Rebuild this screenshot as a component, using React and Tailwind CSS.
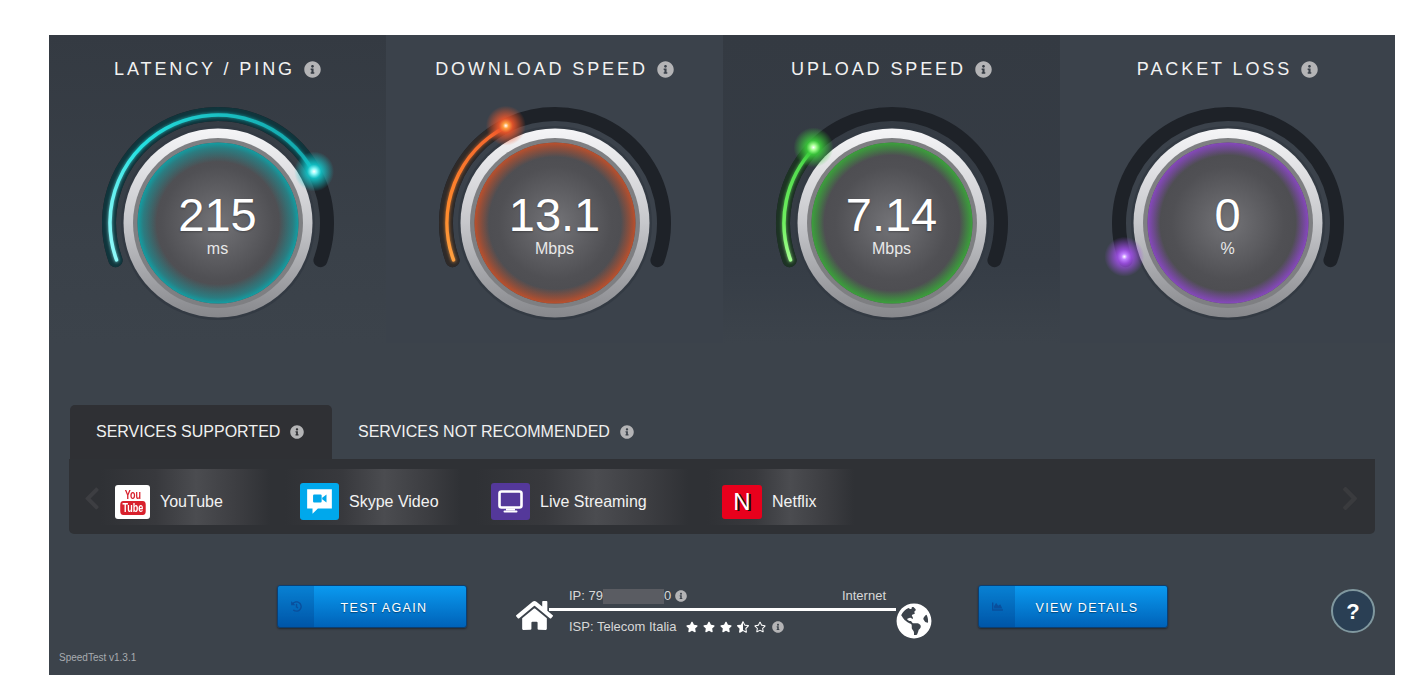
import React from "react";
import { FaInfoCircle, FaHome, FaGlobeAmericas, FaHistory, FaChartArea, FaStar, FaStarHalfAlt, FaRegStar, FaChevronLeft, FaChevronRight } from "react-icons/fa";

const gauges = [
  { id: "ping", title: "LATENCY / PING", value: "215", unit: "ms", end: 331.8, glow: "#0fa3a8", core: "#12c8cc", from: "#8ffafa", mid: "#25e2e2", to: "#12a8ad", tint: "#10353c", edge: 0.76, col: "bg-[linear-gradient(#343a42,#3a4149_70%,#3c434b)]" },
  { id: "down", title: "DOWNLOAD SPEED", value: "13.1", unit: "Mbps", end: 243.2, glow: "#c2502a", core: "#f0562a", from: "#ffa040", mid: "#ff8a2c", to: "#f4622c", tint: "#2e2a29", edge: 0.82, col: "bg-[#3b424b]" },
  { id: "up", title: "UPLOAD SPEED", value: "7.14", unit: "Mbps", end: 223.9, glow: "#3aa63a", core: "#3ccf3c", from: "#a4ff90", mid: "#70f060", to: "#48d648", tint: "#1d3324", edge: 0.84, col: "bg-[linear-gradient(#343a42,#363d46_75%,#3c434b)]" },
  { id: "loss", title: "PACKET LOSS", value: "0", unit: "%", end: 162, glow: "#8a48c4", core: "#a050e8", from: "#c080ff", mid: "#a050e8", to: "#a050e8", tint: "#1f2329", edge: 0.84, col: "bg-[#3b424b]" },
];

const services = [
  { name: "YouTube", icon: <YoutubeIcon />, cell: "w-[185px] pl-[15px]" },
  { name: "Skype Video", icon: <SkypeIcon />, cell: "w-[191px] pl-[15px]" },
  { name: "Live Streaming", icon: <LiveIcon />, cell: "w-[231px] pl-[15px]" },
  { name: "Netflix", icon: <NetflixIcon />, cell: "w-[160px] pl-[15px]" },
];

const point = (deg, r = 109) => {
  const a = (deg * Math.PI) / 180;
  return [120 + r * Math.cos(a), 120 + r * Math.sin(a)];
};

const arc = (from, to, r = 109) => {
  const [x1, y1] = point(from, r);
  const [x2, y2] = point(to, r);
  return `M ${x1} ${y1} A ${r} ${r} 0 ${to - from > 180 ? 1 : 0} 1 ${x2} ${y2}`;
};

function Info({ className }) {
  return <FaInfoCircle className={`text-[#b4b4b6] ${className}`} />;
}

function Gauge({ g }) {
  const [sx, sy] = point(160);
  const [ex, ey] = point(g.end);
  const hasValue = g.end > 165;
  return (
    <div className="relative w-[240px] h-[240px]">
      <svg width="240" height="240" viewBox="0 0 240 240" className="absolute inset-0 overflow-visible">
        <defs>
          <linearGradient id={`ring-${g.id}`} x1="0" y1="0" x2="0" y2="1">
            <stop offset="0" stopColor="#f5f5f7" />
            <stop offset="0.5" stopColor="#c6c7cb" />
            <stop offset="1" stopColor="#87888c" />
          </linearGradient>
          <radialGradient id={`disc-${g.id}`}>
            <stop offset="0" stopColor="#737377" />
            <stop offset="0.7" stopColor="#505054" />
            <stop offset="1" stopColor="#4c4c50" />
          </radialGradient>
          <radialGradient id={`edge-${g.id}`}>
            <stop offset={g.edge} stopColor={g.glow} stopOpacity="0" />
            <stop offset="0.93" stopColor={g.glow} stopOpacity="0.55" />
            <stop offset="1" stopColor={g.glow} stopOpacity="0.95" />
          </radialGradient>
          <radialGradient id={`dot-${g.id}`}>
            <stop offset="0" stopColor="#ffffff" />
            <stop offset="0.14" stopColor={g.from} />
            <stop offset="0.35" stopColor={g.core} stopOpacity="0.9" />
            <stop offset="1" stopColor={g.core} stopOpacity="0" />
          </radialGradient>
          <linearGradient id={`line-${g.id}`} gradientUnits="userSpaceOnUse" x1={sx} y1={sy} x2={ex} y2={ey}>
            <stop offset="0" stopColor={g.from} />
            <stop offset="0.3" stopColor={g.mid} />
            <stop offset="1" stopColor={g.to} />
          </linearGradient>
          <filter id={`soft-${g.id}`} x="-30%" y="-30%" width="160%" height="160%">
            <feGaussianBlur stdDeviation="1.6" />
          </filter>
        </defs>

        <path d={arc(160, 380)} fill="none" stroke="#1e2228" strokeWidth="14" strokeLinecap="round" />
        {hasValue && (
          <>
            <path d={arc(160, g.end)} fill="none" stroke={g.tint} strokeWidth="14" strokeLinecap="round" />
            <path d={arc(160, g.end, 108)} fill="none" stroke={`url(#line-${g.id})`} strokeOpacity="0.55" strokeWidth="5" strokeLinecap="round" filter={`url(#soft-${g.id})`} />
            <path d={arc(160, g.end, 108)} fill="none" stroke={`url(#line-${g.id})`} strokeWidth="3.5" strokeLinecap="round" />
          </>
        )}

        <circle cx="120" cy="120" r="97" fill="#333a43" />
        <circle cx="120" cy="120" r="94.5" fill={`url(#ring-${g.id})`} />
        <circle cx="120" cy="120" r="85" fill="#7e7f82" />
        <circle cx="120" cy="120" r="80.5" fill={`url(#disc-${g.id})`} />
        <circle cx="120" cy="120" r="80.5" fill={`url(#edge-${g.id})`} />
        <circle cx={ex} cy={ey} r="20" fill={`url(#dot-${g.id})`} />
      </svg>
      <div className="absolute inset-x-0 top-[93px] flex flex-col items-center text-white">
        <span className="text-[47px] leading-[38px] [text-shadow:0_1px_2px_rgba(0,0,0,0.3)]">{g.value}</span>
        <span className="text-[16px] leading-[18px] mt-[6px] text-[#e8e8e8]">{g.unit}</span>
      </div>
    </div>
  );
}

function YoutubeIcon() {
  return (
    <div className="w-[35px] h-[34px] rounded-[3px] bg-white flex flex-col items-center justify-center font-bold text-[#d8202c] leading-none">
      <span className="text-[12px] leading-[12px] scale-x-75">You</span>
      <span className="text-[12px] leading-[14px] px-[3px] rounded-[4px] bg-[#d8202c] text-white scale-x-75">Tube</span>
    </div>
  );
}

function SkypeIcon() {
  return (
    <div className="w-[39px] h-[37px] rounded-[3px] bg-[#00a8ec] flex items-center justify-center">
      <svg width="29" height="29" viewBox="0 0 27 27">
        <path d="M2 2 H25 V20 H12 L7 25 V20 H2 Z" fill="#fff" />
        <rect x="7.5" y="7" width="8" height="7.5" rx="1" fill="#00a8ec" />
        <path d="M16 10 L20 7 V14.5 L16 11.5 Z" fill="#00a8ec" />
      </svg>
    </div>
  );
}

function LiveIcon() {
  return (
    <div className="w-[39px] h-[37px] rounded-[3px] bg-[#54389a] flex items-center justify-center">
      <svg width="27" height="27" viewBox="0 0 27 27">
        <rect x="2.5" y="3.5" width="22" height="16" rx="2" fill="none" stroke="#fff" strokeWidth="2.6" />
        <rect x="9" y="20.5" width="9" height="2" fill="#fff" />
        <rect x="6.5" y="22.5" width="14" height="2" rx="1" fill="#fff" />
      </svg>
    </div>
  );
}

function NetflixIcon() {
  return (
    <div className="w-[40px] h-[34px] rounded-[3px] bg-[#e8001c] flex items-center justify-center text-[24px] text-white [text-shadow:2px_1px_0_#111]">
      N
    </div>
  );
}

function BlueButton({ icon, label, textClass }) {
  return (
    <button className="flex h-[43px] w-[190px] overflow-hidden rounded-[3px] border border-[#0b3f73] bg-[linear-gradient(#0a9af0,#0062b8)] shadow-[0_1px_2px_rgba(0,0,0,0.4)]">
      <span className="flex h-full w-[36px] items-center justify-center bg-[rgba(0,40,110,0.22)] text-[#0a4f9c] text-[11px]">{icon}</span>
      <span className={`flex-1 h-full flex items-center justify-center pt-[3px] text-[12.5px] tracking-[1.35px] text-white [text-shadow:0_1px_1px_rgba(0,0,0,0.4)] ${textClass}`}>{label}</span>
    </button>
  );
}

export default function App() {
  return (
    <div className="w-full h-[687px] overflow-hidden bg-white pt-[35px] pl-[49px] font-['Liberation_Sans',Arial,sans-serif]">
      <div className="w-[1346px] h-[640px] bg-[#3c434b] text-white">
        {/* Gauges */}
        <div className="grid grid-cols-[337px_337px_337px_335px] h-[285px]">
          {gauges.map((g) => (
            <div key={g.id} className={`flex flex-col items-center pt-[22px] ${g.col}`}>
              <div className="flex items-center h-[24px] gap-[9px] text-[18px] tracking-[2.9px] text-[#f2f2f2] whitespace-nowrap">
                {g.title}
                <Info className="text-[17px]" />
              </div>
              <div className="mt-[22px]">
                <Gauge g={g} />
              </div>
            </div>
          ))}
        </div>

        {/* Services tabs */}
        <div className="mt-[85px] ml-[21px] flex h-[54px] text-[16px] text-[#f0f0f0]">
          <div className="flex items-center gap-[10px] rounded-t-[5px] bg-[#2f3034] pl-[26px] pr-[20px] w-[262px] whitespace-nowrap">
            SERVICES SUPPORTED <Info className="text-[14px]" />
          </div>
          <div className="flex items-center gap-[10px] pl-[26px] whitespace-nowrap">
            SERVICES NOT RECOMMENDED <Info className="text-[14px]" />
          </div>
        </div>
        <div className="ml-[20px] w-[1306px] h-[75px] rounded-b-[5px] bg-[#2f3135] flex items-center">
          <FaChevronLeft className="ml-[15px] w-[16px] text-[27px] mt-[3px] text-[#3d3e42]" />
          <div className="flex h-[56px] items-stretch">
            {services.map((s) => (
              <div key={s.name} className={`flex items-center gap-[10px] pt-[10px] bg-[linear-gradient(90deg,#2f3135,#38393d_30%,#4b4c50_52%,#3c3d41_75%,#2f3135_92%)] ${s.cell}`}>
                {s.icon}
                <span className="text-[16px] text-[#f2f2f2] whitespace-nowrap">{s.name}</span>
              </div>
            ))}
          </div>
          <FaChevronRight className="ml-auto mr-[16px] w-[18px] text-[27px] mt-[3px] text-[#3a3b3e]" />
        </div>

        {/* Bottom row */}
        <div className="mt-[51px] ml-[228px] flex items-start">
          <BlueButton icon={<FaHistory />} label="TEST AGAIN" textClass="pr-[12px]" />

          <div className="ml-[49px] mt-[3px] flex w-[417px] h-[52px] items-center text-[13px] text-[#d8d8d8]">
            <FaHome className="text-[37px] text-white -mr-[4px] mt-[3px] shrink-0 w-[37px]" />
            <div className="w-[347px] shrink-0">
              <div className="flex justify-between items-center pl-[20px] pr-[10px] h-[18px]">
                <span className="flex items-center">
                  IP: 79
                  <span className="inline-block w-[61px] h-[15px] bg-[#5a5c62]" />0
                  <Info className="ml-[4px] text-[12px]" />
                </span>
                <span>Internet</span>
              </div>
              <div className="h-[3px] bg-white mt-[3px] mb-[2px]" />
              <div className="flex items-center pl-[20px] h-[28px]">
                ISP: Telecom Italia
                <span className="ml-[10px] flex gap-[5px] text-[12px] text-white">
                  <FaStar />
                  <FaStar />
                  <FaStar />
                  <FaStarHalfAlt />
                  <FaRegStar />
                </span>
                <Info className="ml-[6px] text-[12px]" />
              </div>
            </div>
            <FaGlobeAmericas className="text-[36px] text-white shrink-0 mt-[14px]" />
          </div>

          <div className="ml-[45px]">
            <BlueButton icon={<FaChartArea />} label="VIEW DETAILS" textClass="pr-[8px]" />
          </div>

          <button className="ml-[163px] w-[44px] h-[44px] mt-[4px] rounded-full border-2 border-[#80989f] bg-[#2a3f54] text-[22px] font-bold text-white">
            ?
          </button>
        </div>

        <div className="mt-[10px] ml-[10px] text-[10px] text-[#a8acb0]">SpeedTest v1.3.1</div>
      </div>
    </div>
  );
}
